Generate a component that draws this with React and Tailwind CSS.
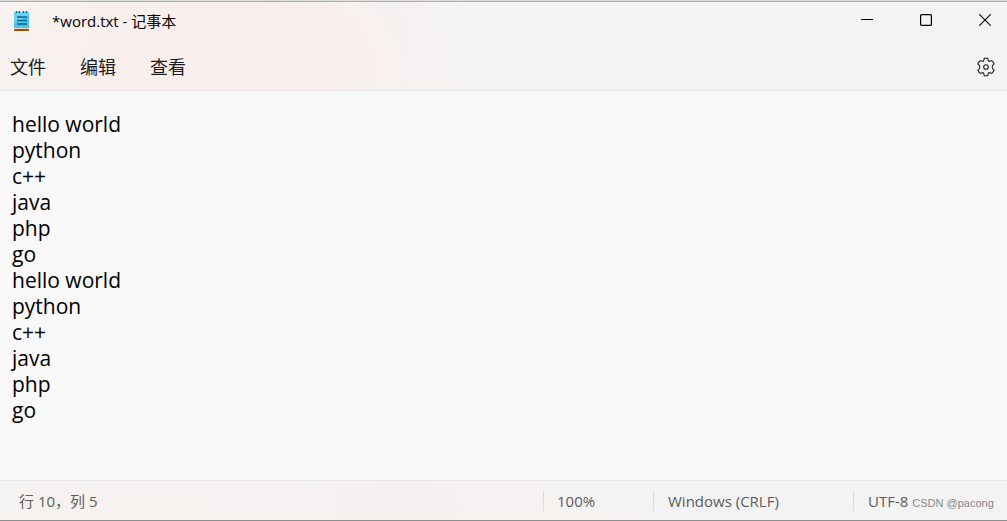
import React, { useState } from 'react';

const MENUS = ['文件', '编辑', '查看'];

const INITIAL_TEXT = `hello world
python
c++
java
php
go
hello world
python
c++
java
php
go`;

function NotepadIcon() {
  return (
    <svg width="18" height="22" viewBox="0 0 18 22" aria-hidden="true">
      <rect x="1" y="17" width="15" height="4" rx="1" fill="#a14a0b" />
      <rect x="1" y="17" width="15" height="2" fill="#e9d9cc" />
      <rect x="1" y="2" width="15" height="16" rx="1" fill="#6bd3f0" />
      <path d="M1 13 L16 5 V17 a1 1 0 0 1 -1 1 H2 a1 1 0 0 1 -1 -1 Z" fill="#4fc3e6" />
      <path d="M3.5 1 V3 M6.5 1 V3 M10.5 1 V3 M13.5 1 V3" stroke="#0e5f80" strokeWidth="1.4" />
      <path d="M4 7 H14 M4 10.5 H14 M4 14 H14" stroke="#04678f" strokeWidth="1.6" />
    </svg>
  );
}

function SettingsIcon() {
  return (
    <svg width="20" height="20" viewBox="0 0 20 20" fill="none" stroke="#222" strokeWidth="1.1" strokeLinejoin="round" aria-hidden="true">
      <path d="M8.2 1.4 Q10 1 11.8 1.4 L12.2 3.5 Q12.6 4.5 13.7 4.3 L15.8 3.6 Q17.3 4.9 18.2 6.9 L16.6 8.4 Q15.8 10 16.6 11.6 L18.2 13.1 Q17.3 15.1 15.8 16.4 L13.7 15.7 Q12.6 15.5 12.2 16.5 L11.8 18.6 Q10 19 8.2 18.6 L7.8 16.5 Q7.4 15.5 6.3 15.7 L4.2 16.4 Q2.7 15.1 1.8 13.1 L3.4 11.6 Q4.2 10 3.4 8.4 L1.8 6.9 Q2.7 4.9 4.2 3.6 L6.3 4.3 Q7.4 4.5 7.8 3.5 Z" />
      <circle cx="10" cy="10" r="2.3" />
    </svg>
  );
}

function WindowControls() {
  return (
    <div className="flex h-9 gap-[15px] self-start">
      <button aria-label="最小化" className="flex w-11 items-center justify-center">
        <svg width="12" height="12" viewBox="0 0 12 12" aria-hidden="true">
          <path d="M0 5.5 H12" stroke="#000" />
        </svg>
      </button>
      <button aria-label="最大化" className="flex w-11 items-center justify-center">
        <svg width="12" height="12" viewBox="0 0 12 12" aria-hidden="true">
          <rect x="0.6" y="0.6" width="10.8" height="10.8" rx="1" fill="none" stroke="#000" strokeWidth="1.2" />
        </svg>
      </button>
      <button aria-label="关闭" className="flex w-11 items-center justify-center">
        <svg width="12" height="12" viewBox="0 0 12 12" aria-hidden="true">
          <path d="M0.3 0.3 L11.7 11.7 M11.7 0.3 L0.3 11.7" stroke="#000" strokeWidth="1.1" />
        </svg>
      </button>
    </div>
  );
}

export default function App() {
  const [text, setText] = useState(INITIAL_TEXT);

  return (
    <div className="flex min-h-screen flex-col border-b border-[#8f8f8f] bg-[#f9f9f9] font-['Open_Sans','Noto_Sans_CJK_SC',sans-serif] text-[#1b1b1b]">
      {/* Title bar and menu */}
      <header className="border-b border-[#e5e5e5] bg-[#f3f3f3] bg-[radial-gradient(ellipse_280px_130px_at_215px_65px,#fbeeec,transparent),linear-gradient(90deg,#f5f3f0,#f6f1ef_25%,#f3f3f3_48%)]">
        <div className="h-0.5 border-b border-[#adadad] bg-[#dcdcda]" />
        <div className="flex h-[38px] items-center justify-between pl-[13px]">
          <div className="flex items-center gap-[21px]">
            <NotepadIcon />
            <h1 className="text-[15px] leading-5 text-black">*word.txt - 记事本</h1>
          </div>
          <WindowControls />
        </div>
        <div className="flex h-[50px] items-center justify-between pt-1 pr-[11px] pl-2.5">
          <nav className="flex gap-[34px]">
            {MENUS.map((menu) => (
              <button key={menu} className="text-lg leading-6">
                {menu}
              </button>
            ))}
          </nav>
          <button aria-label="设置">
            <SettingsIcon />
          </button>
        </div>
      </header>

      <textarea
        aria-label="文本编辑器"
        value={text}
        onChange={(e) => setText(e.target.value)}
        spellCheck={false}
        rows={12}
        className="w-full flex-1 resize-none px-3 pt-5 text-[21px] leading-[26px] text-black outline-none"
      />

      {/* Status bar */}
      <footer className="flex h-10 items-center border-t border-[#e5e5e5] bg-[linear-gradient(90deg,#f5f3f1,#f6f1f0_40%,#f3f3f3_75%)] text-[15px] leading-5 text-[#5c5c5c]">
        <div className="flex-1 pl-[19px]">行 10，列 5</div>
        <div className="w-[110px] border-l border-[#dcdcdc] pl-[13px]">100%</div>
        <div className="w-[200px] border-l border-[#dcdcdc] pl-3.5">Windows (CRLF)</div>
        <div className="flex w-[154px] items-center gap-1 border-l border-[#dcdcdc] pl-3.5">
          <span>UTF-8</span>
          <span className="pt-1 font-['Liberation_Sans',sans-serif] text-[11px] leading-4 whitespace-nowrap text-[#888]">CSDN @pacong</span>
        </div>
      </footer>
    </div>
  );
}
